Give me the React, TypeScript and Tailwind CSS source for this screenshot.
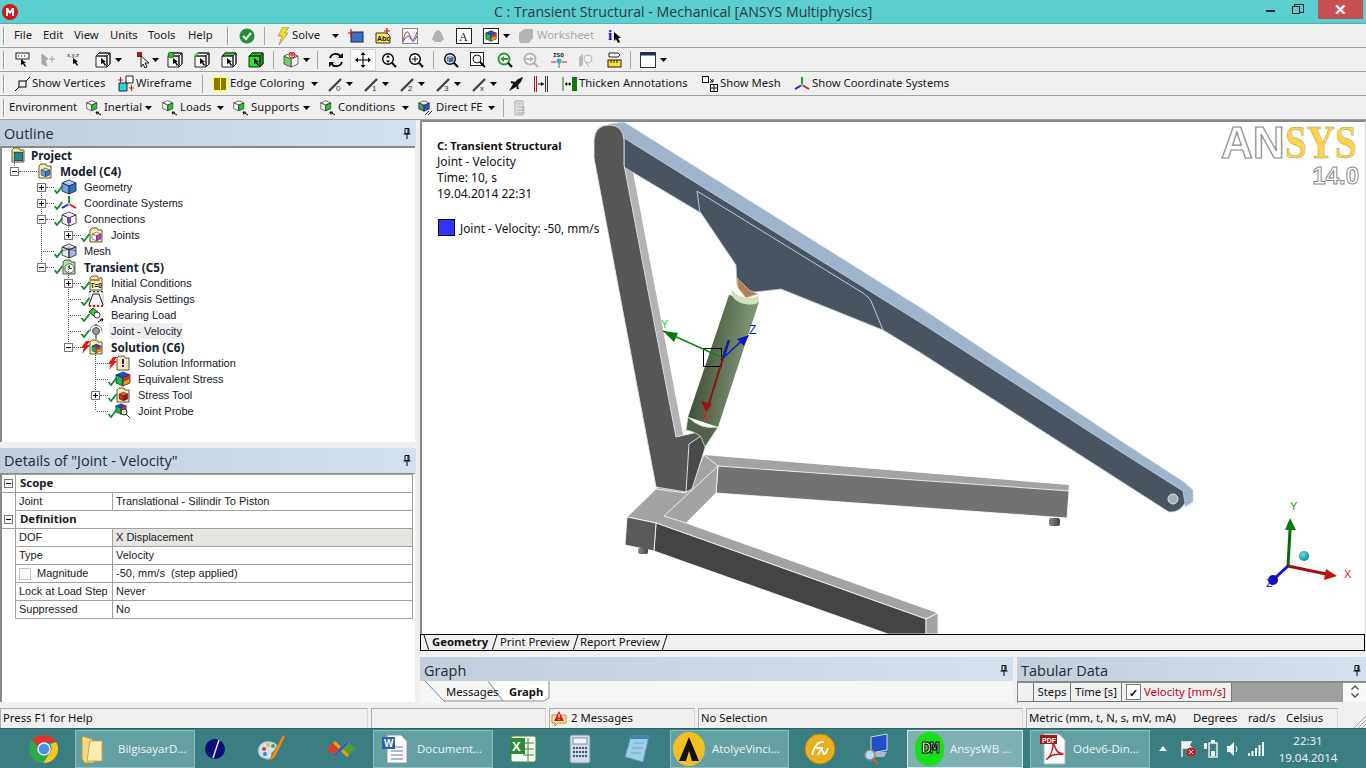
import type { ReactNode } from "react";

const Ic = ({ children, className = "" }: { children: ReactNode; className?: string }) => (
  <svg viewBox="0 0 16 16" className={`w-4 h-4 shrink-0 ${className}`}>
    {children}
  </svg>
);

const Caret = ({ className = "" }: { className?: string }) => (
  <svg viewBox="0 0 7 4" className={`w-[7px] h-[4px] shrink-0 ${className}`}>
    <path d="M0 0h7L3.5 4z" fill="#000" />
  </svg>
);

const Sep = ({ className = "" }: { className?: string }) => (
  <div className={`w-px h-[18px] bg-[#a8a8a8] shrink-0 ${className}`} />
);

const Grip = ({ className = "" }: { className?: string }) => (
  <div className={`w-[2px] h-[18px] border-l border-[#a0a0a0] bg-white shrink-0 ${className}`} />
);

const Pointer = ({ x = 7, y = 6 }: { x?: number; y?: number }) => (
  <path transform={`translate(${x} ${y})`} d="M0 0l5 4H3l2 3-1 1-2-3-2 1z" fill="#000" />
);

const Box = ({ top = "none", side = "none", face = "#fff" }: { top?: string; side?: string; face?: string }) => (
  <>
    <path d="M1 4l3-3h11v11l-3 3H1z" fill={face} stroke="#222" />
    <path d="M1 4l3-3h11l-3 3z" fill={top} stroke="#222" />
    <path d="M12 4l3-3v11l-3 3z" fill={side} stroke="#222" />
    <path d="M1 4h11v11" fill="none" stroke="#222" />
  </>
);

const Cube = ({ c = "#6aa5e8", d = "#2f6fc0", t = "#a9cdf5", e = "#223" }: { c?: string; d?: string; t?: string; e?: string }) => (
  <>
    <path d="M8 1l7 3-7 3-7-3z" fill={t} stroke={e} strokeWidth=".8" />
    <path d="M1 4l7 3v8l-7-3z" fill={c} stroke={e} strokeWidth=".8" />
    <path d="M15 4L8 7v8l7-3z" fill={d} stroke={e} strokeWidth=".8" />
  </>
);

const Folder = ({ children, c = "#fff39c" }: { children?: ReactNode; c?: string }) => (
  <Ic>
    <path d="M2 15V3l2-2h5l1 2h4v12z" fill={c} stroke="#444" strokeWidth=".9" />
    <g transform="translate(3.5 4.5) scale(.62)">{children}</g>
  </Ic>
);

const Triad = () => (
  <>
    <path d="M8 9V1" stroke="#18a018" strokeWidth="2" />
    <path d="M8 9l7 4" stroke="#d81818" strokeWidth="2" />
    <path d="M8 9l-7 4" stroke="#1818d8" strokeWidth="2" />
    <circle cx="8" cy="9" r="1.5" fill="#9ad" />
  </>
);

const Colored = () => (
  <>
    <path d="M8 1l7 3-7 3-7-3z" fill="#1e4fd8" stroke="#112" strokeWidth=".7" />
    <path d="M1 4l7 3v8l-7-3z" fill="#18b85a" stroke="#112" strokeWidth=".7" />
    <path d="M15 4L8 7v8l7-3z" fill="#e8a020" stroke="#112" strokeWidth=".7" />
    <path d="M8 7l7-3v4l-7 3z" fill="#d83020" />
  </>
);

const Lever = ({ label, className = "" }: { label: string; className?: string }) => (
  <Ic className={className}>
    <path d="M1 15L13 3" stroke="#444" strokeWidth="2.4" />
    <text x="8" y="15" fontSize="8" fill="#333" fontFamily="Liberation Sans, sans-serif">
      {label}
    </text>
  </Ic>
);

const Mag = ({ children, c = "#000", className = "" }: { children?: ReactNode; c?: string; className?: string }) => (
  <Ic className={className}>
    <circle cx="7" cy="7" r="5.3" fill="#fff" stroke={c} strokeWidth="1.4" />
    <path d="M11 11l4 4" stroke="#000" strokeWidth="2.2" />
    {children}
  </Ic>
);

const RowBar = ({ children }: { children: ReactNode }) => (
  <div className="h-6 flex items-center shrink-0 pl-[3px] bg-[#f0f0f0] border-b border-[#a0a0a0] text-[#1a1a1a] text-[11.3px] whitespace-nowrap">
    {children}
  </div>
);

const TitleBar = () => (
  <div className="h-6 flex items-center shrink-0 relative bg-[#5bcfcf] border-b border-[#4fb3b3] font-['Open_Sans',sans-serif] text-[#2a3a3c] text-[14.15px]">
    <svg viewBox="0 0 16 16" className="w-4 h-4 ml-[2px]">
      <circle cx="8" cy="8" r="8" fill="#d81414" />
      <path d="M4 12V4h2l2 3 2-3h2v8h-2V8L8 10 6 8v4z" fill="#fff" />
    </svg>
    <span className="ml-[476px]">C : Transient Structural - Mechanical [ANSYS Multiphysics]</span>
    <div className="absolute right-[3px] top-0 flex items-start">
      <div className="w-[9px] h-[2px] bg-[#222] mt-[10px]" />
      <div className="relative w-[10px] h-[9px] ml-[19px] mt-[4px] border border-[#222]">
        <div className="absolute left-[-3px] top-[1px] w-[8px] h-[8px] border border-[#222] bg-[#5bcfcf]" />
      </div>
      <div className="w-[45px] h-[19px] ml-[14px] bg-[#c75050] flex items-center justify-center text-white text-[15px] font-bold leading-none">
        ✕
      </div>
    </div>
  </div>
);

const Toolbars = () => (
  <>
    <RowBar>
      <Grip />
      <span className="ml-[9px] w-[29px]">File</span>
      <span className="w-[31px]">Edit</span>
      <span className="w-[36px]">View</span>
      <span className="w-[38px]">Units</span>
      <span className="w-[40px]">Tools</span>
      <span className="w-[36px]">Help</span>
      <Grip className="ml-[3px]" />
      <Ic className="ml-[10px]">
        <circle cx="8" cy="8" r="7.5" fill="#1f8f3a" />
        <path d="M4 8l3 3 5-6" fill="none" stroke="#fff" strokeWidth="2" />
      </Ic>
      <Sep className="ml-[9px]" />
      <svg viewBox="0 0 12 18" className="ml-[12px] w-3 h-[18px] shrink-0">
        <path d="M6 0h6L8 6h3L2 18l3-9H1z" fill="#f5e020" stroke="#777" strokeWidth=".6" />
      </svg>
      <span className="ml-[3px] w-[38px]">Solve</span>
      <Caret className="ml-[2px]" />
      <Ic className="ml-[9px]">
        <rect x="3" y="4" width="12" height="10" fill="#3a6fd0" stroke="#223" />
        <path d="M0 5h7M3 1v8" stroke="#c81818" strokeWidth="1.2" />
      </Ic>
      <Ic className="ml-[11px]">
        <path d="M1 5h11l3 3v7H1z" fill="#ffec50" stroke="#333" />
        <text x="2" y="13" fontSize="7" fontWeight="700" fill="#111" fontFamily="Liberation Sans, sans-serif">Abc</text>
        <path d="M9 3h6M12 0v6" stroke="#c81818" strokeWidth="1.2" />
      </Ic>
      <Ic className="ml-[11px]">
        <rect x=".5" y=".5" width="15" height="15" fill="#f4f4fa" stroke="#888" />
        <path d="M1 12C4 2 6 2 8 8s4 5 7-4" fill="none" stroke="#c83030" />
        <path d="M1 14C4 8 7 6 9 11s4 1 6-3" fill="none" stroke="#3050c0" />
      </Ic>
      <svg viewBox="0 0 14 14" className="ml-[13px] w-[14px] h-[14px] shrink-0">
        <path d="M1 10l3-7 3-2 3 2 3 7-3 3H4z" fill="#b0b0b0" />
      </svg>
      <Ic className="ml-[11px]">
        <rect x=".5" y=".5" width="15" height="15" fill="#fff" stroke="#222" />
        <text x="3" y="13" fontSize="12" fill="#111" fontFamily="Liberation Serif, serif">A</text>
      </Ic>
      <Ic className="ml-[11px]">
        <rect x=".5" y=".5" width="15" height="15" fill="#fff" stroke="#222" />
        <g transform="translate(2 2) scale(.75)"><Colored /></g>
      </Ic>
      <Caret className="ml-[4px]" />
      <Ic className="ml-[8px]">
        <path d="M1 5l5-4h9v9l-4 5H3L1 13z" fill="#b4b4b4" />
      </Ic>
      <span className="ml-[3px] w-[60px] text-[#a8a8a8]">Worksheet</span>
      <span className="ml-[11px] font-['Liberation_Serif',serif] font-bold text-[#1414e0] text-[15px] leading-none">i</span>
      <svg viewBox="0 0 8 12" className="ml-[2px] mt-[4px] w-2 h-3 shrink-0">
        <path d="M0 0l7 6H4l2 4-2 1-2-4-2 2z" fill="#000" />
      </svg>
    </RowBar>

    <RowBar>
      <Grip />
      <Ic className="ml-[10px]">
        <rect x="1" y="1" width="13" height="6" fill="#fff" stroke="#222" />
        <path d="M3 4h1M6 4h1M9 4h1" stroke="#000" />
        <Pointer x={6} y={7} />
      </Ic>
      <Ic className="ml-[9px]">
        <path d="M2 2l6 5-3 1 2 6-5-2zM9 7h6M12 4v7" fill="#a8a8a8" stroke="#a8a8a8" />
      </Ic>
      <Ic className="ml-[11px]">
        <text x="0" y="5" fontSize="6" fill="#111" fontFamily="Liberation Sans, sans-serif">x,y,z</text>
        <Pointer x={6} y={6} />
      </Ic>
      <Ic className="ml-[12px]"><Box /><Pointer x={6} y={6} /></Ic>
      <Caret className="ml-[4px]" />
      <Ic className="ml-[14px]">
        <rect x="1" y="0" width="5" height="5" fill="#9c1c1c" />
        <path d="M5 4l8 7H9l2 4-2 1-2-4-2 3z" fill="#fff" stroke="#000" strokeWidth=".9" />
      </Ic>
      <Caret />
      <Ic className="ml-[8px]"><Box /><circle cx="4" cy="3" r="3" fill="#22c822" stroke="#222" strokeWidth=".6" /><Pointer x={6} y={6} /></Ic>
      <Ic className="ml-[11px]"><Box /><path d="M1 4l3-3" stroke="#22e022" strokeWidth="2.4" /><Pointer x={6} y={6} /></Ic>
      <Ic className="ml-[11px]"><Box top="#22e022" /><Pointer x={6} y={6} /></Ic>
      <Ic className="ml-[11px]"><Box top="#18d018" side="#0ea80e" face="#22e822" /><Pointer x={6} y={6} /></Ic>
      <Sep className="ml-[9px]" />
      <Ic className="ml-[9px]">
        <path d="M8 7l7-3v8l-7 3z" fill="#fff" stroke="#444" strokeWidth=".8" />
        <path d="M1 4l7 3v8l-7-3z" fill="#72d060" stroke="#444" strokeWidth=".8" />
        <path d="M8 1l7 3-7 3-7-3z" fill="#fff" stroke="#444" strokeWidth=".8" />
        <circle cx="9" cy="3" r="3" fill="none" stroke="#c81818" />
        <path d="M9 1v4M7 3h4" stroke="#c81818" />
      </Ic>
      <Caret className="ml-[4px]" />
      <Sep className="ml-[7px]" />
      <Ic className="ml-[10px]">
        <path d="M2 6a6 6 0 0 1 11-1M14 10a6 6 0 0 1-11 1" fill="none" stroke="#000" strokeWidth="1.8" />
        <path d="M15 1v5h-5zM1 15v-5h5z" fill="#000" />
      </Ic>
      <div className="ml-[6px] w-[26px] h-[22px] shrink-0 flex items-center justify-center bg-[#f8f8f8] border border-[#d4d4d4]">
        <Ic>
          <path d="M8 1v14M1 8h14" stroke="#000" />
          <path d="M8 0l2.5 3h-5zM8 16l2.5-3h-5zM0 8l3-2.5v5zM16 8l-3-2.5v5z" fill="#000" />
        </Ic>
      </div>
      <Mag className="ml-[5px]"><path d="M7 3l2 2.5H5zM7 11l2-2.5H5z" fill="#000" /></Mag>
      <Mag className="ml-[11px]"><path d="M7 4v6M4 7h6" stroke="#000" /></Mag>
      <Sep className="ml-[9px]" />
      <Mag className="ml-[9px]"><g transform="translate(3.5 3.5) scale(.45)"><Cube /></g></Mag>
      <Ic className="ml-[11px]">
        <rect x=".5" y=".5" width="13" height="13" fill="#fff" stroke="#222" />
        <circle cx="7" cy="7" r="4" fill="none" stroke="#111" />
        <path d="M10 10l5 5" stroke="#000" strokeWidth="2" />
      </Ic>
      <Ic className="ml-[11px]">
        <circle cx="7" cy="7" r="5.5" fill="#fff" stroke="#2a9a3a" strokeWidth="2" />
        <path d="M3 7l4-3v6z" fill="#2a9a3a" />
        <path d="M7 6h4v2H7z" fill="#2a9a3a" />
        <path d="M11 11l4 4" stroke="#000" strokeWidth="2.2" />
      </Ic>
      <Ic className="ml-[10px]">
        <circle cx="7" cy="7" r="5.5" fill="#fff" stroke="#b4b4b4" strokeWidth="2" />
        <path d="M11 7L7 4v6zM3 6h4v2H3z" fill="#b4b4b4" />
        <path d="M11 11l4 4" stroke="#b4b4b4" strokeWidth="2.2" />
      </Ic>
      <Ic className="ml-[12px]">
        <text x="2" y="5" fontSize="6" fontWeight="700" fill="#111" fontFamily="Liberation Mono, monospace">ISO</text>
        <circle cx="8" cy="9" r="2.5" fill="#35a8e0" />
        <path d="M0 10h5M11 10h5" stroke="#c81818" />
        <path d="M8 11v5" stroke="#18a018" />
      </Ic>
      <Ic className="ml-[11px]">
        <path d="M1 5l4-3v11l-4 2z" fill="#b8b8b8" />
        <circle cx="10" cy="7" r="4" fill="none" stroke="#b8b8b8" />
        <path d="M8 11l3 4" stroke="#b8b8b8" />
      </Ic>
      <Ic className="ml-[13px]">
        <path d="M2 1h9l2 2-2 2H2z" fill="#fff" stroke="#222" />
        <rect x="1" y="8" width="13" height="7" fill="#ffe030" stroke="#222" />
        <path d="M4 8v3M7 8v3M10 8v3" stroke="#222" />
      </Ic>
      <Sep className="ml-[7px]" />
      <Ic className="ml-[9px]">
        <rect x=".5" y=".5" width="15" height="15" fill="#fff" stroke="#333" />
        <rect x="1" y="1" width="14" height="2.5" fill="#1a2a6a" />
      </Ic>
      <Caret className="ml-[4px]" />
    </RowBar>

    <RowBar>
      <Grip />
      <Ic className="ml-[10px]">
        <rect x="4" y="5" width="7" height="6" fill="none" stroke="#000" />
        <path d="M0 15l4-4M11 5l4-4" stroke="#000" />
      </Ic>
      <span className="ml-px w-[74px]">Show Vertices</span>
      <svg viewBox="0 0 18 18" className="ml-[11px] w-[18px] h-[18px] shrink-0">
        <path d="M9 1h7v7H9z" fill="#fff" stroke="#222" />
        <path d="M2 8h8v8H2z" fill="#20d8e0" stroke="#222" />
        <path d="M1 5h5M3.500 2v6M12 13h5M14.500 10v6" stroke="#c81818" />
      </svg>
      <span className="ml-px w-[56px]">Wireframe</span>
      <Sep className="ml-[10px]" />
      <div className="ml-[10px] w-[14px] h-[14px] shrink-0 flex gap-px p-px bg-[#ffff30]">
        <div className="flex-1 bg-[#8a7a00]" />
        <div className="flex-1 bg-[#8a7a00]" />
      </div>
      <span className="ml-[3px] w-[78px]">Edge Coloring</span>
      <Caret className="ml-[3px]" />
      <Lever label="0" className="ml-[10px]" />
      <Caret className="ml-[2px]" />
      <Lever label="1" className="ml-[11px]" />
      <Caret className="ml-[2px]" />
      <Lever label="2" className="ml-[11px]" />
      <Caret className="ml-[2px]" />
      <Lever label="3" className="ml-[11px]" />
      <Caret className="ml-[2px]" />
      <Lever label="x" className="ml-[11px]" />
      <Caret className="ml-[2px]" />
      <Ic className="ml-[11px]">
        <path d="M1 15l4-7 5-5 5-2-2 5-5 5z" fill="#111" />
        <path d="M3 6l4 1M9 9l1 4" stroke="#111" strokeWidth="2" />
      </Ic>
      <Ic className="ml-[9px]">
        <path d="M1.500 0v16M3.500 0v16" stroke="#b02020" />
        <path d="M12.500 0v16M14.500 0v16" stroke="#333" />
        <path d="M5 8h6" stroke="#111" />
        <path d="M11 8L8 6v4z" fill="#111" />
      </Ic>
      <Ic className="ml-[13px]">
        <path d="M1 1v14" stroke="#0a7a0a" />
        <rect x="10" y="1" width="5" height="14" fill="#0a7a0a" />
        <path d="M3 8h6" stroke="#111" />
        <path d="M3 8l2-2v4zM9 8L7 6v4z" fill="#111" />
      </Ic>
      <span className="ml-px w-[121px]">Thicken Annotations</span>
      <Ic className="ml-[2px]">
        <rect x=".5" y=".5" width="6" height="6" fill="#fff" stroke="#111" />
        <path d="M8 3l3 3M11 3v3H8" fill="none" stroke="#111" />
        <rect x="8.500" y="8.500" width="7" height="7" fill="#fff" stroke="#111" />
        <path d="M12 8v8M8 12h8" stroke="#111" />
      </Ic>
      <span className="ml-[2px] w-[72px]">Show Mesh</span>
      <Ic className="ml-[2px]"><Triad /></Ic>
      <span className="ml-[2px]">Show Coordinate Systems</span>
    </RowBar>

    <RowBar>
      <Grip />
      <span className="ml-[4px] w-[74px]">Environment</span>
      <LoadIcon className="ml-[3px]" />
      <span className="ml-[2px] w-[38px]">Inertial</span>
      <Caret className="ml-[3px]" />
      <LoadIcon className="ml-[10px]" />
      <span className="ml-[2px] w-[34px]">Loads</span>
      <Caret className="ml-[3px]" />
      <LoadIcon className="ml-[9px]" />
      <span className="ml-[2px] w-[49px]">Supports</span>
      <Caret className="ml-[3px]" />
      <LoadIcon className="ml-[10px]" />
      <span className="ml-[2px] w-[61px]">Conditions</span>
      <Caret className="ml-[3px]" />
      <Ic className="ml-[9px]">
        <g transform="scale(.75)"><Cube c="#3aa060" d="#3050c0" t="#f0f0f0" /></g>
        <path d="M7 15l4-4M10 15l4-4" stroke="#222" />
      </Ic>
      <span className="ml-[2px] w-[48px]">Direct FE</span>
      <Caret className="ml-[4px]" />
      <Sep className="ml-[8px]" />
      <Ic className="ml-[9px]">
        <path d="M2 1h8v14H2z" fill="#e4e4e4" stroke="#aaa" />
        <path d="M4 4h4M4 7h8M4 10h8M4 13h8" stroke="#aaa" />
      </Ic>
    </RowBar>
  </>
);

function LoadIcon({ className = "" }: { className?: string }) {
  return (
    <Ic className={className}>
      <g transform="scale(.72)">
        <Cube c="#fff" d="#28c828" t="#fff" e="#111" />
      </g>
      <path d="M10 12l5 3M10 12l3 .3M10 12l1 2.500" stroke="#000" strokeWidth="1" />
    </Ic>
  );
}

const PanelHead = ({ title, h = "h-[26px] pt-px" }: { title: string; h?: string }) => (
  <div className={`${h} shrink-0 flex items-center pl-1 pr-[5px] justify-between bg-gradient-to-r from-[#c1cfdd] to-[#d3e1ef] text-[14.5px] text-[#1f2a33] font-['Open_Sans',sans-serif]`}>
    <span>{title}</span>
    <svg viewBox="0 0 8 11" className="w-2 h-[11px]">
      <path d="M2 .5h4v5H2zM.5 6h7M4 6v5M5 1v4" fill="none" stroke="#000" />
    </svg>
  </div>
);

const Expander = ({ sign }: { sign?: string }) =>
  sign ? (
    <div className="w-[9px] h-[9px] shrink-0 border border-[#777] bg-white relative">
      <div className="absolute left-px right-px top-[3px] h-px bg-black" />
      {sign === "+" && <div className="absolute top-px bottom-px left-[3px] w-px bg-black" />}
    </div>
  ) : (
    <div className="w-[9px] shrink-0" />
  );

const Mark = ({ kind }: { kind?: string }) => {
  if (kind === "c")
    return (
      <svg viewBox="0 0 9 9" className="w-[9px] h-[9px] mt-[5px] shrink-0 -mr-[2px] relative z-10">
        <path d="M.5 5l2.500 3L8.500 1" fill="none" stroke="#0a8a2a" strokeWidth="1.8" />
      </svg>
    );
  if (kind === "b")
    return (
      <svg viewBox="0 0 9 13" className="w-[9px] h-[13px] shrink-0 -mr-[2px] relative z-10">
        <path d="M5 0h4L6 4h3L1 13l2-6H0z" fill="#e01818" />
      </svg>
    );
  return <div className="w-[7px] shrink-0" />;
};

type Node = { x: number; sign?: string; mark?: string; icon: ReactNode; label: string; bold?: boolean; sel?: boolean };

const inner = {
  model: <Cube c="#5f9fe0" d="#3a78c8" />,
};

const nodes: Node[] = [
  { x: 14, sign: "-", icon: <Folder>{inner.model}</Folder>, label: "Model (C4)", bold: true },
  { x: 41, sign: "+", mark: "c", icon: <Ic><Cube /></Ic>, label: "Geometry" },
  { x: 41, sign: "+", mark: "c", icon: <Ic><Triad /></Ic>, label: "Coordinate Systems" },
  { x: 41, sign: "-", mark: "c", icon: <Ic><Cube c="#fff" d="#fff" t="#fff" /><path d="M6 6h4v6H6z" fill="#a030d0" /></Ic>, label: "Connections" },
  { x: 68, sign: "+", mark: "c", icon: <Folder><Cube c="#fff" d="#c040c0" t="#fff" /></Folder>, label: "Joints" },
  { x: 41, mark: "c", icon: <Ic><Cube c="#dfe6f5" d="#a8b8e0" t="#eef" /><path d="M1 8l14-4M8 3v12M1 4l14 4" stroke="#335" strokeWidth=".6" /></Ic>, label: "Mesh" },
  { x: 41, sign: "-", mark: "c", icon: <Folder c="#a8e8a0"><circle cx="8" cy="8" r="7.500" fill="#fff" stroke="#111" /><path d="M8 3v5h4" fill="none" stroke="#111" strokeWidth="1.400" /></Folder>, label: "Transient (C5)", bold: true },
  { x: 68, sign: "+", mark: "c", icon: <Ic><path d="M2 15V3l2-2h5l1 2h4v12z" fill="#fff39c" stroke="#444" strokeWidth=".9" /><path d="M3 5h9" stroke="#c81818" strokeWidth="1.200" /><text x="2.500" y="13" fontSize="6.500" fontWeight="700" fontFamily="Liberation Sans, sans-serif">T=0</text></Ic>, label: "Initial Conditions" },
  { x: 68, mark: "c", icon: <Ic><rect x="1" y="1" width="14" height="14" fill="#f4f4f4" stroke="#bbb" /><path d="M1 14l4-11h6l4 11" fill="none" stroke="#222" /><path d="M1 0h14" stroke="#1818d8" strokeDasharray="2 2" strokeWidth="2" /><path d="M1 15h14" stroke="#d81818" strokeDasharray="2 2" strokeWidth="2" /></Ic>, label: "Analysis Settings" },
  { x: 68, mark: "c", icon: <Ic><path d="M1 5l4-4 6 5-4 4z" fill="#22d822" stroke="#111" strokeWidth=".8" /><circle cx="9" cy="8" r="3" fill="#fff" stroke="#111" strokeWidth=".8" /><path d="M10 15l5-3M15 12l-3 .2M15 12l-1 2.500" stroke="#000" /></Ic>, label: "Bearing Load" },
  { x: 68, mark: "c", sel: true, icon: <Ic><circle cx="8" cy="8" r="3.500" fill="#999" stroke="#555" /><path d="M2 8a6 6 0 0 1 12 0" fill="none" stroke="#777" /><path d="M8 1v2M8 11v5" stroke="#555" strokeWidth="1.400" /></Ic>, label: "Joint - Velocity" },
  { x: 68, sign: "-", mark: "b", icon: <Folder><Colored /></Folder>, label: "Solution (C6)", bold: true },
  { x: 95, mark: "b", icon: <Ic><path d="M2 15V3l2-2h5l1 2h4v12z" fill="#ffe9a8" stroke="#444" strokeWidth=".9" /><path d="M7 4h2v5H7z" fill="#1414e0" /><path d="M7 10h2v2H7z" fill="#1414e0" /></Ic>, label: "Solution Information" },
  { x: 95, mark: "c", icon: <Ic><Colored /></Ic>, label: "Equivalent Stress" },
  { x: 95, sign: "+", mark: "c", icon: <Folder><Cube c="#e02020" d="#a01010" t="#ff5050" /></Folder>, label: "Stress Tool" },
  { x: 95, mark: "c", icon: <Ic><g transform="scale(.75)"><Colored /></g><circle cx="9" cy="9" r="3" fill="#ddd" stroke="#333" /><path d="M11 11l4 4" stroke="#222" /></Ic>, label: "Joint Probe" },
];

const TreeRow = ({ n }: { n: Node }) => (
  <div className="h-4 flex items-center" style={{ paddingLeft: n.x - 4 }}>
    <Expander sign={n.sign} />
    <div className={`${n.x === 14 ? "w-[18px]" : "w-[8px]"} ${n.sign ? "" : "-ml-[3px] w-[11px]"} border-t border-dotted border-[#555] shrink-0`} />
    {n.x !== 14 && <Mark kind={n.mark} />}
    {n.icon}
    <span className={`ml-[5px] pl-[2px] pr-px leading-4 ${n.sel ? "bg-[#efefef]" : ""} ${n.bold ? "font-['Noto_Sans',sans-serif] font-bold text-[11.7px]" : ""}`}>{n.label}</span>
  </div>
);

const guideLines = [
  "left-[14px] top-[15px] h-[8px]",
  "left-[41px] top-[39px] h-[80px]",
  "left-[68px] top-[119px] h-[80px]",
  "left-[68px] top-[71px] h-[16px]",
  "left-[95px] top-[199px] h-[64px]",
];

const Tree = () => (
  <div className="h-[296px] shrink-0 mr-px relative bg-white border-l-2 border-t-2 border-[#8a8a8a] font-['Liberation_Sans',sans-serif] text-[11px] text-[#14202c]">
    <div className="relative -ml-[2px] -mt-px">
      {guideLines.map((g) => (
        <div key={g} className={`absolute w-px border-l border-dotted border-[#555] ${g}`} />
      ))}
      <div className="h-4 flex items-center pl-[10px]">
        <Folder><rect x="1" y="1" width="14" height="14" fill="#1a8a90" stroke="#111" /></Folder>
        <span className="ml-[5px] font-['Noto_Sans',sans-serif] font-bold text-[11.7px] leading-4">Project</span>
      </div>
      {nodes.map((n) => (
        <TreeRow key={n.label} n={n} />
      ))}
    </div>
  </div>
);

const GroupRow = ({ title }: { title: string }) => (
  <div className="h-[18px] flex items-center border-b border-[#a0a0a0]">
    <div className="w-[13px] shrink-0 flex justify-center">
      <Expander sign="-" />
    </div>
    <div className="flex-1 h-full flex items-center pl-[4px] pb-px font-['Noto_Sans',sans-serif] font-bold text-[11.4px] border-l border-[#a0a0a0]">{title}</div>
  </div>
);

const PropRow = ({ label, value, shade, box }: { label: string; value: string; shade?: boolean; box?: boolean }) => (
  <div className="h-[18px] flex items-center pl-[13px]">
    <div className="w-[98px] h-full shrink-0 flex items-center pl-[3px] border-l border-b border-r border-[#a0a0a0] whitespace-nowrap">
      {box && <div className="w-3 h-3 mr-[6px] border border-[#c4c4c4] bg-white shrink-0" />}
      {label}
    </div>
    <div className={`flex-1 h-full flex items-center pl-[3px] border-b border-[#a0a0a0] whitespace-pre ${shade ? "bg-[#e6e5e1]" : ""}`}>{value}</div>
  </div>
);

const Details = () => (
  <div className="h-[229px] shrink-0 mr-px bg-white border-l-2 border-t border-[#8a8a8a] font-['Liberation_Sans',sans-serif] text-[11px] text-[#1a1a1a]">
    <div className="w-[411px] border-r border-t border-[#a0a0a0]">
      <GroupRow title="Scope" />
      <PropRow label="Joint" value="Translational - Silindir To Piston" />
      <GroupRow title="Definition" />
      <PropRow label="DOF" value="X Displacement" shade />
      <PropRow label="Type" value="Velocity" />
      <PropRow label="Magnitude" value="-50, mm/s  (step applied)" box />
      <PropRow label="Lock at Load Step" value="Never" />
      <PropRow label="Suppressed" value="No" />
    </div>
  </div>
);

const ArmPath = "M623 138L920 323L1120 452L1182 491L1184 503Q1178 513 1168 512L920 353L882 330L780 289L745 293L736 285L735 265L700 213L623 167Z";

const Model = () => (
  <svg viewBox="421 122 943 512" className="block w-full h-full">
    <defs>
      <linearGradient id="cyl" x1="0" y1="0" x2="1" y2="0.25">
        <stop offset="0" stopColor="#2f3a2e" />
        <stop offset=".35" stopColor="#4d5d46" />
        <stop offset="1" stopColor="#87a07d" />
      </linearGradient>
      <radialGradient id="ball" cx=".4" cy=".35" r=".7">
        <stop offset="0" stopColor="#5fe0e0" />
        <stop offset="1" stopColor="#0a8a98" />
      </radialGradient>
      <linearGradient id="pin" x1="0" y1="0" x2="1" y2="0">
        <stop offset="0" stopColor="#888" />
        <stop offset="1" stopColor="#444" />
      </linearGradient>
    </defs>

    {/* base frame */}
    <path d="M703 455L1068 485L1067 492L717 466L715 493L685 523L655 489Z" fill="#a3a3a3" />
    <path d="M717 466L1068 491L1066 518L715 493Z" fill="#727272" stroke="#fff" strokeWidth=".8" />
    <path d="M655 489L685 493L703 455L717 466L715 493L685 523L937 613L925 619L655 523L626 517Z" fill="#a3a3a3" stroke="#fff" strokeWidth=".8" />
    <path d="M717 466L663 516L685 523" fill="none" stroke="#fff" strokeWidth=".8" />
    <path d="M655 523L925 619V634H887L653 551Z" fill="#444" stroke="#fff" strokeWidth=".8" />
    <path d="M626 517L655 523L653 551L624 545Z" fill="#5a5a5a" stroke="#fff" strokeWidth=".8" />
    <path d="M925 619L937 613V634H925Z" fill="#a3a3a3" stroke="#fff" strokeWidth=".8" />
    <rect x="1048" y="518" width="11" height="8" rx="2" fill="url(#pin)" />
    <rect x="637" y="548" width="10" height="6" rx="2" fill="url(#pin)" />

    {/* light inner face of the column */}
    <path d="M622 167L632 172L682 435L675 437Z" fill="#b3b3b3" />

    {/* arm */}
    <path d="M608 124L623 122L920 308L1120 441L1183 482L1192 490V502L1184 507L1182 491L1120 452L920 323L623 138L604 130Z" fill="#9fb3cb" stroke="#cfdcea" strokeWidth=".7" />
    <path d={ArmPath} fill="#4a5460" stroke="#b7cbe0" strokeWidth=".8" />
    <path d="M696 191L699 213M696 191L862 293Q868 297 870 301L882 330" fill="none" stroke="#b7cbe0" strokeWidth="1" />
    <circle cx="1172" cy="499" r="5" fill="#a0aebd" stroke="#dde6ef" />

    {/* column */}
    <path d="M593 140Q594 125 608 125Q622 125 623 140L623 165L675 437L697 432L702 443L685 492L655 487L593 158Z" fill="#565656" stroke="#e4e4e4" strokeWidth=".9" />
    <path d="M688 444L700 436L706 442L691 489L685 492Z" fill="#4a4a4a" stroke="#fff" strokeWidth=".8" />

    {/* cylinder */}
    <path d="M736 278L737 288L745 298L757 294L748 290L740 282Z" fill="#b08058" stroke="#f2c8a0" strokeWidth=".7" />
    <path d="M728 295L758 302L717 427L687 417Z" fill="url(#cyl)" />
    <path d="M730 292Q732 302 744 304T758 301L757 296Q747 300 739 296T733 290Z" fill="#cfe3bf" />
    <path d="M685 430Q695 432 700 437L704 447L717 427Q700 430 687 417Z" fill="#54604d" stroke="#c9e8bd" strokeWidth=".8" />

    {/* local triad */}
    <rect x="702.500" y="348.500" width="18" height="18" fill="none" stroke="#000" />
    <path d="M722 358L662 331" stroke="#0a8a0a" strokeWidth="1.500" />
    <path d="M662 331L677 333L673 342Z" fill="#0a7a0a" />
    <path d="M722 358L745 337" stroke="#1414d8" strokeWidth="1.500" />
    <path d="M748 335L743 346L736 339Z" fill="#1414c8" />
    <path d="M722 358L728 340" stroke="#1a1a9a" strokeWidth="2.500" />
    <path d="M722 358L706 410" stroke="#8a1414" strokeWidth="2" />
    <path d="M705 412L700 401L711 404Z" fill="#a01010" />
    <text x="660" y="328" fontSize="11" fill="#22d822" fontFamily="Liberation Sans, sans-serif">Y</text>
    <text x="748" y="334" fontSize="12" fill="#1414e8" fontFamily="Liberation Sans, sans-serif">Z</text>
    <text x="701" y="420" fontSize="10" fill="#e01818" fontFamily="Liberation Sans, sans-serif">X</text>

    {/* global triad */}
    <path d="M1287 566L1289 530" stroke="#0a6a0a" strokeWidth="3" />
    <path d="M1289 518L1295 530H1284Z" fill="#0a7a0a" />
    <path d="M1287 566L1325 574" stroke="#a01010" strokeWidth="3" />
    <path d="M1336 576L1323 580L1325 569Z" fill="#c81010" />
    <path d="M1287 566L1274 578" stroke="#1414d8" strokeWidth="3" />
    <circle cx="1272" cy="580" r="5" fill="#1010b8" />
    <circle cx="1303" cy="556" r="5" fill="url(#ball)" />
    <text x="1289" y="510" fontSize="11" fill="#18a018" fontFamily="Liberation Sans, sans-serif">Y</text>
    <text x="1343" y="578" fontSize="11" fill="#e01818" fontFamily="Liberation Sans, sans-serif">X</text>
    <text x="1265" y="587" fontSize="11" fill="#1414e8" fontFamily="Liberation Sans, sans-serif">Z</text>
  </svg>
);

const Logo = () => (
  <div className="absolute left-[799px] top-[4px] w-[140px] flex flex-col items-end font-['Liberation_Sans',sans-serif] font-bold">
    <div className="h-[34px] w-full flex items-baseline">
      <span className="w-[65px] text-[44px] leading-[34px] text-white [-webkit-text-stroke:1.200px_#8a8a8a]">AN</span>
      <span className="inline-block origin-left scale-x-[.85] font-['Liberation_Serif',serif] text-[46px] leading-[34px] text-[#ffd24d] [-webkit-text-stroke:0.500px_#b49a5a]">SYS</span>
    </div>
    <span className="mt-[6px] mr-[2px] text-[24px] leading-[20px] text-white [-webkit-text-stroke:1px_#8a8a8a]">14.0</span>
  </div>
);

const Viewport = () => (
  <div className="relative flex-1 min-h-0 bg-white border-t-2 border-l-2 border-[#8a8a8a] border-r border-r-[#d0d0d0]">
    <Model />
    <Logo />
    <div className="absolute left-[15px] top-[16px] text-[12px] leading-4 text-[#111]">
      <div className="font-bold text-[11.2px]">C: Transient Structural</div>
      <div>Joint - Velocity</div>
      <div>Time: 10, s</div>
      <div>19.04.2014 22:31</div>
      <div className="flex items-center mt-[17px]">
        <div className="ml-px w-[17px] h-[17px] bg-[#3333ff] border border-black" />
        <span className="ml-[5px] text-[11.8px]">Joint - Velocity: -50, mm/s</span>
      </div>
    </div>
  </div>
);

const Slash = () => (
  <svg viewBox="0 0 8 16" className="w-2 h-4 shrink-0">
    <path d="M1 16L6 0" stroke="#111" />
  </svg>
);

const ViewTabs = () => (
  <div className="h-[17px] shrink-0 flex items-center bg-[#f0f0f0] border border-black text-[11.3px] text-[#111] pl-[2px] mr-px whitespace-nowrap">
    <svg viewBox="0 0 8 16" className="w-2 h-4 shrink-0">
      <path d="M1 0l5 16" stroke="#111" />
    </svg>
    <span className="font-bold ml-px w-[59px]">Geometry</span>
    <Slash />
    <span className="w-[73px] pl-px">Print Preview</span>
    <Slash />
    <span className="w-[81px]">Report Preview</span>
    <Slash />
  </div>
);

const BottomPanels = () => (
  <div className="h-[46px] shrink-0 flex mt-[6px] text-[11.3px]">
    <div className="w-[593px] shrink-0 flex flex-col">
      <PanelHead title="Graph" h="h-[24px] pt-[3px]" />
      <div className="flex-1 flex items-center bg-[#f6f6f6] relative pl-[26px] text-[#111]">
        <svg viewBox="0 0 135 22" className="absolute left-0 top-0 w-[135px] h-[22px]">
          <path d="M83 20H124L129 17V0H70Z" fill="#fff" />
          <path d="M5 0L24 20H83L68 0M83 20H124L129 17V0" fill="none" stroke="#888" />
        </svg>
        <span className="relative w-[63px]">Messages</span>
        <span className="relative font-bold">Graph</span>
      </div>
    </div>
    <div className="ml-[4px] flex-1 flex flex-col">
      <PanelHead title="Tabular Data" h="h-[24px] pt-[3px]" />
      <div className="flex-1 flex items-start bg-[#f0f0f0] border-t-2 border-[#8a8a8a] border-l border-l-[#8a8a8a] text-[#111]">
        <div className="w-[16px] h-[19px] shrink-0 border-r border-b border-[#777]" />
        <div className="w-[37px] h-[19px] shrink-0 border-r border-b border-[#777] flex items-center justify-center">Steps</div>
        <div className="w-[51px] h-[19px] shrink-0 border-r border-b border-[#777] flex items-center justify-center">Time [s]</div>
        <div className="w-[110px] h-[19px] shrink-0 flex items-center pl-[4px] border-r border-b border-[#777]">
          <div className="w-[15px] h-[16px] shrink-0 bg-white border border-[#777] flex items-center justify-center text-[11px] font-bold leading-none">✓</div>
          <span className="ml-[3px] text-[#c00018] whitespace-nowrap">Velocity [mm/s]</span>
        </div>
        <div className="w-[111px] h-[19px] shrink-0 bg-[#a0a0a0]" />
        <div className="flex-1 flex flex-col items-center pt-[2px] gap-[3px] bg-[#f8f8f8] h-[19px]">
          <svg viewBox="0 0 8 5" className="w-2 h-[5px]"><path d="M.5 4.500L4 1l3.500 3.500" fill="none" stroke="#555" strokeWidth="1.400" /></svg>
          <svg viewBox="0 0 8 5" className="w-2 h-[5px]"><path d="M.5.500L4 4 7.500.500" fill="none" stroke="#555" strokeWidth="1.400" /></svg>
        </div>
      </div>
    </div>
  </div>
);

const StatusBar = () => (
  <div className="h-5 shrink-0 flex gap-[3px] bg-[#f0f0f0] text-[11.3px] text-[#111] whitespace-nowrap">
    <Cell w="w-[368px]"><span className="pl-[2px]">Press F1 for Help</span></Cell>
    <Cell w="w-[175px]" />
    <Cell w="w-[146px]">
      <Ic className="ml-[1px]">
        <path d="M1 4h14v8H7l-3 3v-3H1z" fill="#ffe9a0" stroke="#b89030" />
        <path d="M8 0l5 10H3z" fill="#e01818" />
        <path d="M7.500 3h1v4h-1zM7.500 8h1v1h-1z" fill="#fff" />
      </Ic>
      <span className="ml-[4px]">2 Messages</span>
    </Cell>
    <Cell w="w-[325px]"><span className="pl-[2px]">No Selection</span></Cell>
    <Cell w="w-[312px]">
      <span className="pl-[2px] w-[166px]">Metric (mm, t, N, s, mV, mA)</span>
      <span className="w-[55px]">Degrees</span>
      <span className="w-[38px]">rad/s</span>
      <span>Celsius</span>
    </Cell>
    <div className="flex-1 flex justify-end items-end">
      <svg viewBox="0 0 14 14" className="w-[14px] h-[14px]"><path d="M14 2L2 14M14 6L6 14M14 10l-4 4" stroke="#a8a8a8" /></svg>
    </div>
  </div>
);

function Cell({ w, children }: { w: string; children?: ReactNode }) {
  return <div className={`${w} shrink-0 flex items-center border-t border-l border-[#b0b0b0] border-r border-r-[#d8d8d8]`}>{children}</div>;
}

const TaskBtn = ({ w = "w-[120px]", strong, className = "", children }: { w?: string; strong?: boolean; className?: string; children: ReactNode }) => (
  <div className={`${w} ${className} h-[38px] shrink-0 flex items-center overflow-hidden border ${strong ? "bg-[#7fb0b2] border-[#d5e8e8]" : "bg-[#62a0a2] border-[#8dbcbd]"}`}>
    {children}
  </div>
);

const Big = ({ children, className = "" }: { children: ReactNode; className?: string }) => (
  <svg viewBox="0 0 32 32" className={`w-8 h-8 shrink-0 ${className}`}>
    {children}
  </svg>
);

const Taskbar = () => (
  <div className="h-10 shrink-0 flex items-center bg-[#3a7e82] border-t border-[#2f6266] text-[11.5px] text-[#eef6f6] font-['Open_Sans',sans-serif] whitespace-nowrap">
    <Big className="ml-[28px]">
      <path d="M16 2a14 14 0 0 1 12.100 7H16a7 7 0 0 0-6.500 4.500L4.500 7A14 14 0 0 1 16 2z" fill="#e0352b" />
      <path d="M28.100 9a14 14 0 0 1-12.900 21l5.600-9A7 7 0 0 0 22 11z" fill="#f8c81c" />
      <path d="M4.500 7A14 14 0 0 0 15.200 30l5.600-9a7 7 0 0 1-11.300-7.500z" fill="#2fa84a" />
      <circle cx="16" cy="16" r="6" fill="#4a90e0" stroke="#e8f0fa" strokeWidth="1.500" />
    </Big>
    <TaskBtn className="ml-[15px]">
      <Big className="ml-[2px]">
        <path d="M4 3l10 3 2 4v20H7L4 26z" fill="#f5d97a" stroke="#b89a40" />
        <path d="M12 8h12v20H9z" fill="#fdeeb0" stroke="#c8a850" />
      </Big>
      <span className="ml-[8px]">BilgisayarD...</span>
    </TaskBtn>
    <Big className="ml-[4px]">
      <circle cx="16" cy="16" r="10" fill="#0c0c7a" />
      <path d="M20 7l-6 18" stroke="#e8e8ff" strokeWidth="1.500" />
    </Big>
    <Big className="ml-[23px]">
      <path d="M4 18c0-8 8-11 14-9 7 2 7 8 3 9s-4 3-3 5-2 4-6 3-8-3-8-8z" fill="#cfe0ee" stroke="#8ba0b0" />
      <circle cx="10" cy="16" r="2" fill="#d84040" />
      <circle cx="14" cy="12" r="2" fill="#e8c030" />
      <circle cx="19" cy="13" r="2" fill="#40a850" />
      <circle cx="11" cy="21" r="2" fill="#3080d0" />
      <path d="M29 2L18 22l-2 6 5-4L31 4z" fill="#e89030" stroke="#a86010" strokeWidth=".7" />
    </Big>
    <Big className="ml-[39px]">
      <path d="M2 16l7-7 7 7-7 7z" fill="#d84020" />
      <path d="M16 16l7-7 7 7-7 7z" fill="#50a030" />
      <path d="M9 9l7 7-7 7 7-7 7-7-7 7 7 7-7-7z" fill="#f0c020" stroke="#e8a020" strokeWidth="3" />
      <path d="M9 23L23 9" stroke="#3060c0" strokeWidth="3" />
    </Big>
    <TaskBtn className="ml-[16px]">
      <Big className="ml-[5px]">
        <path d="M8 2h14l6 6v22H8z" fill="#fff" stroke="#8898a8" />
        <path d="M12 14h12M12 18h12M12 22h12M12 26h12" stroke="#5878b0" />
        <rect x="3" y="4" width="13" height="12" fill="#2f5ea8" />
        <text x="5" y="14" fontSize="10" fontWeight="700" fill="#fff" fontFamily="Liberation Sans, sans-serif">W</text>
      </Big>
      <span className="ml-[6px]">Document...</span>
    </TaskBtn>
    <Big className="ml-[14px]">
      <rect x="4" y="3" width="25" height="26" rx="2" fill="#f4fbf0" stroke="#3a8a3a" />
      <path d="M16 10h11M16 16h11M16 22h11M21 5v23" stroke="#3a8a3a" />
      <rect x="3" y="5" width="15" height="16" fill="#2f8a3a" />
      <text x="5" y="18" fontSize="13" fontWeight="700" fill="#fff" fontFamily="Liberation Sans, sans-serif">X</text>
    </Big>
    <Big className="ml-[25px]">
      <rect x="6" y="2" width="20" height="28" rx="2" fill="#cfdbe8" stroke="#7a8ca0" />
      <rect x="9" y="5" width="14" height="6" fill="#eef5fb" stroke="#7a8ca0" />
      <path d="M9 15h14M9 19h14M9 23h14" stroke="#44546a" strokeWidth="2" strokeDasharray="2 1" />
    </Big>
    <Big className="ml-[25px]">
      <path d="M10 3h18l-6 26L4 24z" fill="#9fd0e8" stroke="#5a98b8" />
      <path d="M10 3h18v3H10z" fill="#3a88b0" />
      <path d="M12 10h11M11 15h11M10 20h10" stroke="#6aa8c8" />
    </Big>
    <TaskBtn w="w-[119px]" className="ml-[17px]">
      <svg viewBox="0 0 32 34" className="ml-[2px] w-8 h-[34px] shrink-0">
        <ellipse cx="16" cy="17" rx="16" ry="17" fill="#f0c020" />
        <path d="M16 5l10 24h-7l-3-10-3 10H6z" fill="#111" />
      </svg>
      <span className="ml-[7px]">AtolyeVinci...</span>
    </TaskBtn>
    <Big className="ml-[15px]">
      <circle cx="16" cy="16" r="15" fill="#e8b020" stroke="#b88010" />
      <path d="M8 22c2-8 6-14 12-13M10 15h9M14 22c1-3 3-6 4-5s1 4 2 4 3-3 4-6" fill="none" stroke="#fff" strokeWidth="1.800" />
    </Big>
    <Big className="ml-[23px]">
      <path d="M12 4l16-3v16L12 20z" fill="#2050c8" stroke="#d0d8e8" />
      <path d="M14 19h14l-3 5H12z" fill="#b0b8c8" />
      <circle cx="11" cy="22" r="5" fill="#bcd8ec" stroke="#889" strokeWidth="1.500" />
      <path d="M14 26l5 5" stroke="#a87030" strokeWidth="2.500" />
    </Big>
    <TaskBtn w="w-[116px]" strong className="ml-[16px]">
      <div className="ml-[7px] w-[29px] h-[34px] shrink-0 rounded-full bg-[#18e018] flex items-center justify-center font-['Liberation_Mono',monospace] font-bold text-[17px] text-white [-webkit-text-stroke:1px_#000] tracking-[-2px]">
        DM
      </div>
      <span className="ml-[6px]">AnsysWB ...</span>
    </TaskBtn>
    <TaskBtn w="w-[120px]" className="ml-[7px]">
      <Big className="ml-[6px]">
        <path d="M7 1h15l6 6v24H7z" fill="#fff" stroke="#b0b0b0" />
        <path d="M10 26c4-3 6-10 6-14s2 3 4 6 6 2 6 3-8-1-12 2-5 4-4 3z" fill="none" stroke="#c81818" strokeWidth="1.400" />
        <rect x="3" y="2" width="17" height="9" fill="#a01818" />
        <text x="5" y="9.500" fontSize="7" fontWeight="700" fill="#fff" fontFamily="Liberation Sans, sans-serif">PDF</text>
      </Big>
      <span className="ml-[4px]">Odev6-Din...</span>
    </TaskBtn>
    <svg viewBox="0 0 8 5" className="ml-[9px] w-2 h-[5px] shrink-0"><path d="M4 0l4 5H0z" fill="#f0f8f8" /></svg>
    <svg viewBox="0 0 16 18" className="ml-[13px] w-4 h-[18px] shrink-0">
      <path d="M2 1v16M2 2h9l-2 3 3 3H2" fill="#f4f4f4" stroke="#f4f4f4" strokeWidth="1.400" />
      <circle cx="11" cy="12" r="4.500" fill="#d81818" />
      <path d="M9 10l4 4M13 10l-4 4" stroke="#fff" />
    </svg>
    <svg viewBox="0 0 14 18" className="ml-[8px] w-[14px] h-[18px] shrink-0">
      <rect x="5" y="3" width="8" height="14" fill="none" stroke="#f0f8f8" strokeWidth="1.400" />
      <path d="M7 0h4v3H7zM0 3h3v6H0z" fill="#f0f8f8" />
      <rect x="7" y="11" width="4" height="5" fill="#f0f8f8" />
    </svg>
    <svg viewBox="0 0 14 16" className="ml-[8px] w-[14px] h-4 shrink-0">
      <path d="M1 5h3l4-4v14l-4-4H1z" fill="#f0f8f8" />
      <path d="M10 5q2 3 0 6" fill="none" stroke="#f0f8f8" />
    </svg>
    <svg viewBox="0 0 16 14" className="ml-[8px] w-4 h-[14px] shrink-0">
      <path d="M0 11h2v3H0zM3.500 9h2v5h-2zM7 6h2v8H7zM10.500 3h2v11h-2zM14 0h2v14h-2z" fill="#f0f8f8" />
    </svg>
    <div className="ml-[13px] w-[62px] text-center text-[11.5px] leading-[17px] shrink-0">
      <div>22:31</div>
      <div>19.04.2014</div>
    </div>
  </div>
);

export default function App() {
  return (
    <div className="w-[1366px] h-[768px] flex flex-col overflow-hidden bg-[#f0f0f0] font-['Noto_Sans',sans-serif] text-[12px]">
      <TitleBar />
      <Toolbars />
      <div className="flex-1 min-h-0 flex">
        <div className="w-[416px] shrink-0 flex flex-col">
          <PanelHead title="Outline" />
          <Tree />
          <div className="h-[6px] shrink-0" />
          <PanelHead title={'Details of "Joint - Velocity"'} h="h-[25px]" />
          <Details />
        </div>
        <div className="ml-[4px] flex-1 min-w-0 flex flex-col">
          <Viewport />
          <ViewTabs />
          <BottomPanels />
          <div className="h-[5px] shrink-0" />
        </div>
      </div>
      <StatusBar />
      <Taskbar />
    </div>
  );
}
